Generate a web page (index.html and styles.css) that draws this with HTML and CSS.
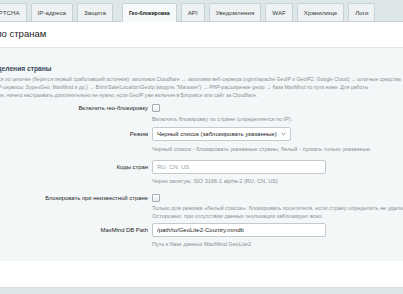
FILE: index.html
```html
<!DOCTYPE html>
<html lang="ru">
  <head>
    <meta charset="UTF-8" />
    <title>Гео-блокировка</title>
    <meta name="viewport" content="width=device-width, initial-scale=1.0" />
    <link rel="stylesheet" href="styles.css">
  </head>

  <body>
    <div class="page">
      <div class="tabs">
        <span class="tab">CAPTCHA</span>
        <span class="tab">IP-адреса</span>
        <span class="tab">Защита</span>
        <span class="tab active">Гео-блокировка</span>
        <span class="tab">API</span>
        <span class="tab">Уведомления</span>
        <span class="tab">WAF</span>
        <span class="tab">Хранилище</span>
        <span class="tab">Логи</span>
      </div>

      <div class="title">Блокировка по странам</div>

      <div class="panel">
        <div class="section-head">Порядок определения страны</div>
        <p class="desc">
          Страна определяется по цепочке (берётся первый сработавший источник): заголовок Cloudflare → заголовки веб-сервера (nginx/apache GeoIP и GeoIP2, Google Cloud) → штатные средства<br>
          геолокации → GeoIP-сервисы: SypexGeo, MaxMind и др.) → Bitrix\Sale\Location\GeoIp (модуль "Магазин") → PHP-расширение geoip → база MaxMind по пути ниже. Для работы<br>
          В типичной установке, ничего настраивать дополнительно не нужно, если GeoIP уже включен в Битриксе или сайт за Cloudflare.
        </p>

        <div class="row row-check">
          <label class="label" for="geo-on">Включить гео-блокировку</label>
          <div class="field">
            <input type="checkbox" id="geo-on" class="check">
            <div class="hint">Включить блокировку по стране (определяется по IP).</div>
          </div>
        </div>

        <div class="row row-select">
          <label class="label" for="mode">Режим</label>
          <div class="field">
            <div class="select" id="mode">
              <span>Черный список (заблокировать указанные)</span>
              <svg class="chevron" width="5" height="4" viewBox="0 0 5 4"><path d="M0.7 1.1l1.8 1.7 1.8-1.7" fill="none" stroke="#666" stroke-width="0.8"/></svg>
            </div>
            <div class="hint">Черный список - блокировать указанные страны; белый - пускать только указанные.</div>
          </div>
        </div>

        <div class="row row-codes">
          <label class="label" for="codes">Коды стран</label>
          <div class="field">
            <input type="text" id="codes" class="input" placeholder="RU, CN, US">
            <div class="hint">Через запятую. ISO 3166-1 alpha-2 (RU, CN, US)</div>
          </div>
        </div>

        <div class="row row-unknown">
          <label class="label" for="unknown">Блокировать при неизвестной стране</label>
          <div class="field">
            <input type="checkbox" id="unknown" class="check">
            <div class="hint hint-tight">
              Только для режима «белый список»: блокировать посетителя, если страну определить не удалось.<br>
              Осторожно: при отсутствии данных геолокации заблокирует всех.
            </div>
          </div>
        </div>

        <div class="row row-path">
          <label class="label" for="dbpath">MaxMind DB Path</label>
          <div class="field">
            <input type="text" id="dbpath" class="input" value="/path/to/GeoLite2-Country.mmdb">
            <div class="hint">Путь к базе данных MaxMind GeoLite2</div>
          </div>
        </div>
      </div>

      <div class="footer"></div>
      <div class="bottom-bar"></div>
    </div>
  </body>
</html>
```

FILE: styles.css
```css
:root {
  --bar: #dde6e9;
  --tab-bg: #eef2f3;
  --tab-border: #c8d1d5;
  --panel: #f4f7f8;
  --line: #e0e6e8;
  --text: #222;
  --muted: #8a8f93;
}

* {
  margin: 0;
  padding: 0;
  box-sizing: border-box;
}

html,
body {
  overflow: hidden;
}

body {
  font-family: 'Liberation Sans', Arial, sans-serif;
  background: #fff;
  color: var(--text);
  width: 403px;
  height: 294px;
}

.page {
  margin-left: -70px;
  width: 900px;
}

/* Tabs */
.tabs {
  background: var(--bar);
  height: 22px;
  padding: 3px 0 0 53px;
  display: flex;
  gap: 4px;
  border-bottom: 1px solid var(--tab-border);
}

.tab {
  background: var(--tab-bg);
  border: 1px solid var(--tab-border);
  border-bottom: none;
  border-radius: 2px 2px 0 0;
  padding: 0 6px;
  font-size: 6.2px;
  color: #363d41;
  line-height: 18px;
}

.tab.active {
  background: #f6f9f9;
  color: #111;
  font-size: 5.2px;
  font-weight: bold;
  padding: 0 6px;
  margin: 0 0 -1px 5px;
}

.title {
  height: 25px;
  padding: 6px 0 0 12px;
  font-size: 9.5px;
  color: #222;
}

/* Panel */
.panel {
  background: var(--panel);
  border-top: 1px solid var(--line);
  padding: 16px 0 13px 20px;
}

.section-head {
  font-size: 6.7px;
  font-weight: bold;
  color: #374a5a;
  line-height: 10px;
  margin-left: 1px;
}

.desc {
  font-size: 5.1px;
  color: var(--muted);
  line-height: 8px;
  margin: 1px 0 0 2px;
  white-space: nowrap;
}

.row {
  display: grid;
  grid-template-columns: 198px 1fr;
  column-gap: 4px;
  align-items: start;
}

.row-check {
  margin-top: 5px;
}

.row-select {
  margin-top: 4px;
}

.row-codes {
  margin-top: 7px;
}

.row-unknown {
  margin-top: 9px;
}

.row-path {
  margin-top: 3px;
}

.label {
  text-align: right;
  font-size: 5.9px;
  color: #222;
  line-height: 14px;
}

.row-check .label,
.row-unknown .label {
  line-height: 8px;
}

.field {
  display: flex;
  flex-direction: column;
  align-items: flex-start;
}

.check {
  appearance: none;
  width: 8px;
  height: 8px;
  border: 1px solid #a4adb2;
  border-radius: 1px;
  background: linear-gradient(#fff, #e6eaec);
}

.select,
.input {
  height: 14px;
  border: 1px solid #c3cbd0;
  border-radius: 2px;
  background: #fff;
  font-family: inherit;
  font-size: 6px;
  color: #222;
  padding: 0 4px;
}

.select {
  width: 139px;
  display: flex;
  align-items: center;
  justify-content: space-between;
}

.input {
  width: 174px;
  outline: none;
}

.input::placeholder {
  color: #9a9fa3;
}

.hint {
  font-size: 5.6px;
  color: var(--muted);
  line-height: 8px;
  margin-top: 3px;
  white-space: nowrap;
}

.row-select .hint {
  margin-top: 4px;
}

.hint-tight {
  margin-top: 2px;
}

.footer {
  height: 26px;
  background: #fff;
}

.bottom-bar {
  height: 12px;
  background: var(--bar);
  border-top: 1px solid #d3dcdf;
}
```
